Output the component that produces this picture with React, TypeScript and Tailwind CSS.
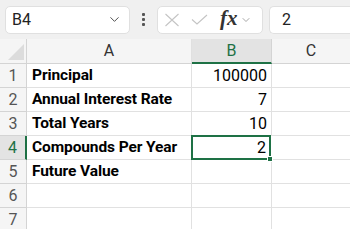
import { ChevronDown } from "lucide-react";

const rows = [
  { n: 1, label: "Principal", value: "100000" },
  { n: 2, label: "Annual Interest Rate", value: "7" },
  { n: 3, label: "Total Years", value: "10" },
  { n: 4, label: "Compounds Per Year", value: "2" },
  { n: 5, label: "Future Value", value: "" },
  { n: 6, label: "", value: "" },
  { n: 7, label: "", value: "" },
];

const App = () => {
  return (
    <div className="w-[350px] h-[229px] overflow-hidden bg-white font-['Roboto',sans-serif] text-black">
      {/* formula bar */}
      <div className="h-[39px] bg-[#f0f0f0] flex items-center pl-[5px]">
        <div className="w-[125px] h-[28px] bg-white rounded-[5px] border border-[#e0e0e0] flex items-center justify-between pl-[6px] pr-[7px]">
          <span className="text-[16px] text-[#222]">B4</span>
          <ChevronDown size={15} strokeWidth={1.5} className="text-[#444]" />
        </div>
        <div className="w-[27px] flex flex-col items-center gap-[2px]">
          <span className="w-[3px] h-[3px] bg-[#555] rounded-[1px]" />
          <span className="w-[3px] h-[3px] bg-[#555] rounded-[1px]" />
          <span className="w-[3px] h-[3px] bg-[#555] rounded-[1px]" />
        </div>
        <div className="w-[106px] h-[28px] bg-white rounded-[5px] border border-[#e0e0e0] flex items-center pl-[6px]">
          <svg width="16" height="14" viewBox="0 0 16 14" className="text-[#c4c4c4]">
            <path d="M1.5 1 L14.5 13 M14.5 1 L1.5 13" stroke="currentColor" strokeWidth="1.1" fill="none" />
          </svg>
          <svg width="17" height="11" viewBox="0 0 17 11" className="text-[#c4c4c4] ml-[11px]">
            <path d="M1 5.5 L6 10 L16 1" stroke="currentColor" strokeWidth="1.1" fill="none" />
          </svg>
          <span className="ml-[12px] font-['Liberation_Serif',serif] italic font-bold text-[21px] text-[#333] leading-none -mt-[3px]">
            fx
          </span>
          <ChevronDown size={12} strokeWidth={1.5} className="text-[#888] ml-[2px]" />
        </div>
        <div className="ml-[6px] flex-1 h-[28px] bg-white rounded-l-[5px] border border-r-0 border-[#e0e0e0] flex items-center pl-[12px]">
          <span className="text-[16px] text-[#222]">2</span>
        </div>
      </div>

      {/* column headers */}
      <div className="flex h-[25px] bg-[#f5f5f5] border-b border-[#d4d4d4]">
        <div className="w-[27px] border-r border-[#d4d4d4] relative">
          <div className="absolute right-[2px] bottom-[3px] w-0 h-0 border-l-[16px] border-l-transparent border-b-[16px] border-b-[#dcdcdc]" />
        </div>
        <div className="w-[165px] border-r border-[#e0e0e0] flex items-center justify-center text-[16px] text-[#333]">
          A
        </div>
        <div className="w-[80px] bg-[#e3e3e3] border-b-2 border-[#1e7145] border-r border-r-[#d4d4d4] flex items-center justify-center text-[16px] text-[#1e7145] -mb-[1px]">
          B
        </div>
        <div className="flex-1 flex items-center justify-center text-[16px] text-[#333]">C</div>
      </div>

      {/* rows */}
      {rows.map((r) => (
        <div key={r.n} className="flex h-[24px]">
          <div
            className={
              r.n === 4
                ? "w-[27px] bg-[#e3e3e3] border-r-2 border-[#1e7145] border-b border-b-[#d4d4d4] flex items-center justify-center text-[16px] text-[#1e7145]"
                : "w-[27px] bg-[#f5f5f5] border-r border-[#d4d4d4] border-b flex items-center justify-center text-[16px] text-[#555]"
            }
          >
            {r.n}
          </div>
          <div className="w-[165px] border-r border-b border-[#e1e1e1] flex items-center pl-[5px] text-[15.5px] font-bold tracking-[-0.1px] whitespace-nowrap">
            {r.label}
          </div>
          <div
            className={
              r.n === 4
                ? "w-[80px] relative border-2 border-[#1e7145] -ml-[1px] -mt-[1px] h-[25px] flex items-center justify-end pr-[3px] text-[16px] z-10"
                : "w-[80px] border-r border-b border-[#e1e1e1] flex items-center justify-end pr-[4px] text-[16px]"
            }
          >
            {r.value}
            {r.n === 4 && (
              <span className="absolute -right-[4px] -bottom-[4px] w-[6px] h-[6px] bg-[#1e7145] border border-white" />
            )}
          </div>
          <div className="flex-1 border-b border-[#e1e1e1]" />
        </div>
      ))}
    </div>
  );
};

export default App;
